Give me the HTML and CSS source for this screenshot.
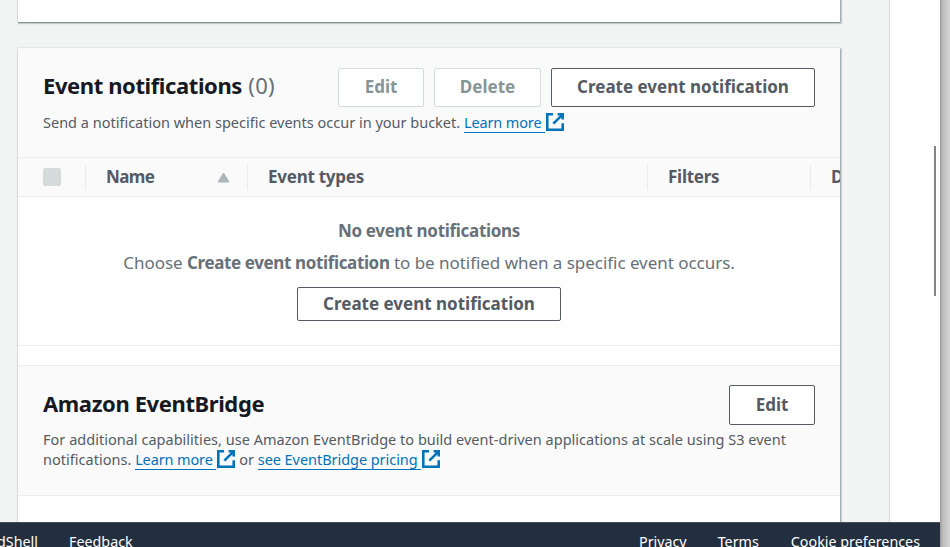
FILE: index.html
```html
<!DOCTYPE html>
<html lang="en">
<head>
<meta charset="utf-8">
<title>Event notifications</title>
<link rel="stylesheet" href="styles.css">
</head>
<body>
<svg class="defs" aria-hidden="true"><symbol id="external" viewBox="1 1 14 14"><path d="M10 2h4v4M6.7 9.3 14 2M14 9.05V14H2V2h4.5"/></symbol></svg>
<div class="window">
  <div class="app">
    <div class="workspace">
      <main class="content">
        <section class="card card-previous"></section>
        <section class="card card-events">
          <header class="section-header">
            <div class="title-row">
              <h2>Event notifications <span class="counter">(0)</span></h2>
              <div class="actions">
                <button class="btn disabled">Edit</button>
                <button class="btn disabled">Delete</button>
                <button class="btn btn-create">Create event notification</button>
              </div>
            </div>
            <p class="description">Send a notification when specific events occur in your bucket. <a class="link"><span>Learn more&nbsp;</span><svg><use href="#external"/></svg></a></p>
          </header>
          <div class="table-head">
            <div class="cell cell-check"><span class="checkbox"></span></div>
            <div class="cell cell-name">Name<svg class="sort" viewBox="0 0 13 11"><path d="M6.5 1 12 10H1Z"/></svg></div>
            <div class="cell cell-types">Event types</div>
            <div class="cell cell-filters">Filters</div>
            <div class="cell cell-last">D</div>
          </div>
          <div class="empty">
            <p class="empty-title">No event notifications</p>
            <p class="empty-text">Choose <b>Create event notification</b> to be notified when a specific event occurs.</p>
            <button class="btn btn-create btn-small">Create event notification</button>
          </div>
          <header class="section-header bridge-header">
            <div class="title-row">
              <h2>Amazon EventBridge</h2>
              <button class="btn btn-edit">Edit</button>
            </div>
            <p class="description">For additional capabilities, use Amazon EventBridge to build event-driven applications at scale using S3 event<br>notifications. <a class="link"><span>Learn more&nbsp;</span><svg><use href="#external"/></svg></a> or <a class="link link-pricing"><span>see EventBridge pricing&nbsp;</span><svg><use href="#external"/></svg></a></p>
          </header>
        </section>
      </main>
      <aside class="side"><div class="scroll-thumb"></div></aside>
    </div>
    <footer class="footer">
      <span class="cloudshell">CloudShell</span>
      <span class="feedback">Feedback</span>
      <span class="privacy">Privacy</span>
      <span class="terms">Terms</span>
      <span class="cookies">Cookie preferences</span>
    </footer>
  </div>
  <div class="window-edge"></div>
</div>
</body>
</html>
```
FILE: styles.css
```css
* { box-sizing: border-box; }
body {
  margin: 0;
  overflow: hidden;
  font-family: "Noto Sans", "Open Sans", sans-serif;
  font-size: 17px;
  color: #545b64;
}
h2, p { margin: 0; }
.defs { display: none; }
.window { display: flex; width: 950px; height: 547px; }
.app { display: flex; flex-direction: column; width: 940px; }
.window-edge {
  width: 10px;
  background: linear-gradient(90deg, #929292 0, #aaa 1px, #bcbcbc 3px, #c9c9c9 6px, #d3d3d3 10px);
}
.workspace { display: flex; height: 522px; overflow: hidden; }
.content {
  display: flex;
  flex-direction: column;
  gap: 26px;
  width: 890px;
  padding-left: 18px;
  background: #f2f4f3;
  border-right: 1px solid #d5dbdb;
}
.card {
  width: 822px;
  flex-shrink: 0;
  background: #fff;
  box-shadow: 1px 1px 0 0 #a3b0b3, 1px 1px 1px 1px rgba(0, 28, 36, .14), -1px 1px 0 0 #d9dddd, 0 -1px 0 0 #eaeded;
}
.card-previous {
  height: 22px;
  box-shadow: 0 1px 0 0 #879596, 1px 0 0 0 #a3b0b3, 1px 1px 1px 1px rgba(0, 28, 36, .2), -1px 0 0 0 #d9dddd;
}
.card-events { height: 500px; }
.section-header {
  height: 110px;
  padding: 20px 25px 0;
  background: #fafafa;
  border-bottom: 1px solid #eaeded;
}
.title-row { display: flex; justify-content: space-between; height: 39px; }
h2 {
  font-size: 22px;
  line-height: 35px;
  letter-spacing: -.4px;
  font-weight: 700;
  color: #16191f;
}
.counter { margin-left: 1px; font-weight: 400; color: #687078; letter-spacing: .3px; }
.actions { display: flex; gap: 10px; }
.btn {
  display: block;
  height: 39px;
  padding: 0 0 2px;
  border: 1px solid #545b64;
  border-radius: 2px;
  background: #fff;
  color: #545b64;
  font: 700 17px/35px "Noto Sans", "Open Sans", sans-serif;
  text-align: center;
  width: 107px;
}
.btn:first-child, .btn-edit { width: 86px; }
.btn.btn-create { width: 264px; }
.btn.disabled { color: #879596; border-color: #d5dbdb; }
.description {
  margin-top: 5px;
  font-size: 14.5px;
  line-height: 20px;
  letter-spacing: 0;
  white-space: nowrap;
}
.link { color: #0073bb; }
.link span { border-bottom: 1px solid #0073bb; letter-spacing: -.13px; }
.link svg {
  width: 18px;
  height: 18px;
  margin-left: 1px;
  vertical-align: -3px;
  fill: none;
  stroke: #0073bb;
  stroke-width: 2;
}
.link.link-pricing span { letter-spacing: -.05px; }
.table-head {
  display: flex;
  align-items: center;
  height: 39px;
  overflow: hidden;
  background: #fafafa;
  border-bottom: 1px solid #eaeded;
  font-weight: 700;
  letter-spacing: -.25px;
}
.cell {
  display: flex;
  flex-shrink: 0;
  align-items: center;
  height: 25px;
  padding-left: 20px;
  line-height: 24px;
  border-right: 1px solid #eaeded;
}
.cell-check { width: 68px; padding-left: 25px; }
.checkbox { width: 18px; height: 18px; border-radius: 2px; background: #d5dbdb; }
.cell-name { width: 162px; justify-content: space-between; padding-right: 17px; letter-spacing: -.6px; }
.sort { width: 13px; height: 11px; fill: #aab7b8; stroke: #aab7b8; stroke-width: 1; stroke-linejoin: round; }
.cell-types { width: 400px; }
.cell-filters { width: 163px; }
.cell-last { width: 40px; border-right: 0; }
.empty {
  display: flex;
  flex-direction: column;
  align-items: center;
  height: 149px;
  padding-top: 22px;
  border-bottom: 1px solid #eaeded;
  color: #687078;
  line-height: 24px;
}
.empty-title { font-weight: 700; letter-spacing: -.3px; }
.empty-text { margin-top: 8px; letter-spacing: -.04px; }
.empty-text b { letter-spacing: -.37px; }
.btn.btn-small { height: 34px; margin-top: 12px; line-height: 31px; padding-bottom: 1px; }
.bridge-header { height: 131px; margin-top: 19px; border-top: 1px solid #eaeded; padding-top: 19px; }
.bridge-header .title-row { height: 40px; }
.bridge-header h2 { line-height: 37px; }
.bridge-header .btn { height: 40px; line-height: 38px; padding: 0; }
.bridge-header .description { margin-top: 4px; letter-spacing: .02px; }
.footer {
  display: flex;
  height: 25px;
  padding-top: 9px;
  overflow: hidden;
  border-top: 1px solid #414d5c;
  background: #232f3e;
  color: #fff;
  font-size: 14.3px;
  line-height: 20px;
  white-space: nowrap;
}
.cloudshell { display: flex; justify-content: flex-end; width: 38px; }
.feedback { margin-left: 31px; }
.privacy { margin-left: auto; }
.terms { margin-left: 31px; }
.cookies { margin: 0 20px 0 32px; }
.side { display: flex; justify-content: flex-end; width: 50px; padding: 146px 4px 0 0; background: #fff; }
.scroll-thumb { width: 2px; height: 150px; background: #858585; }
```
